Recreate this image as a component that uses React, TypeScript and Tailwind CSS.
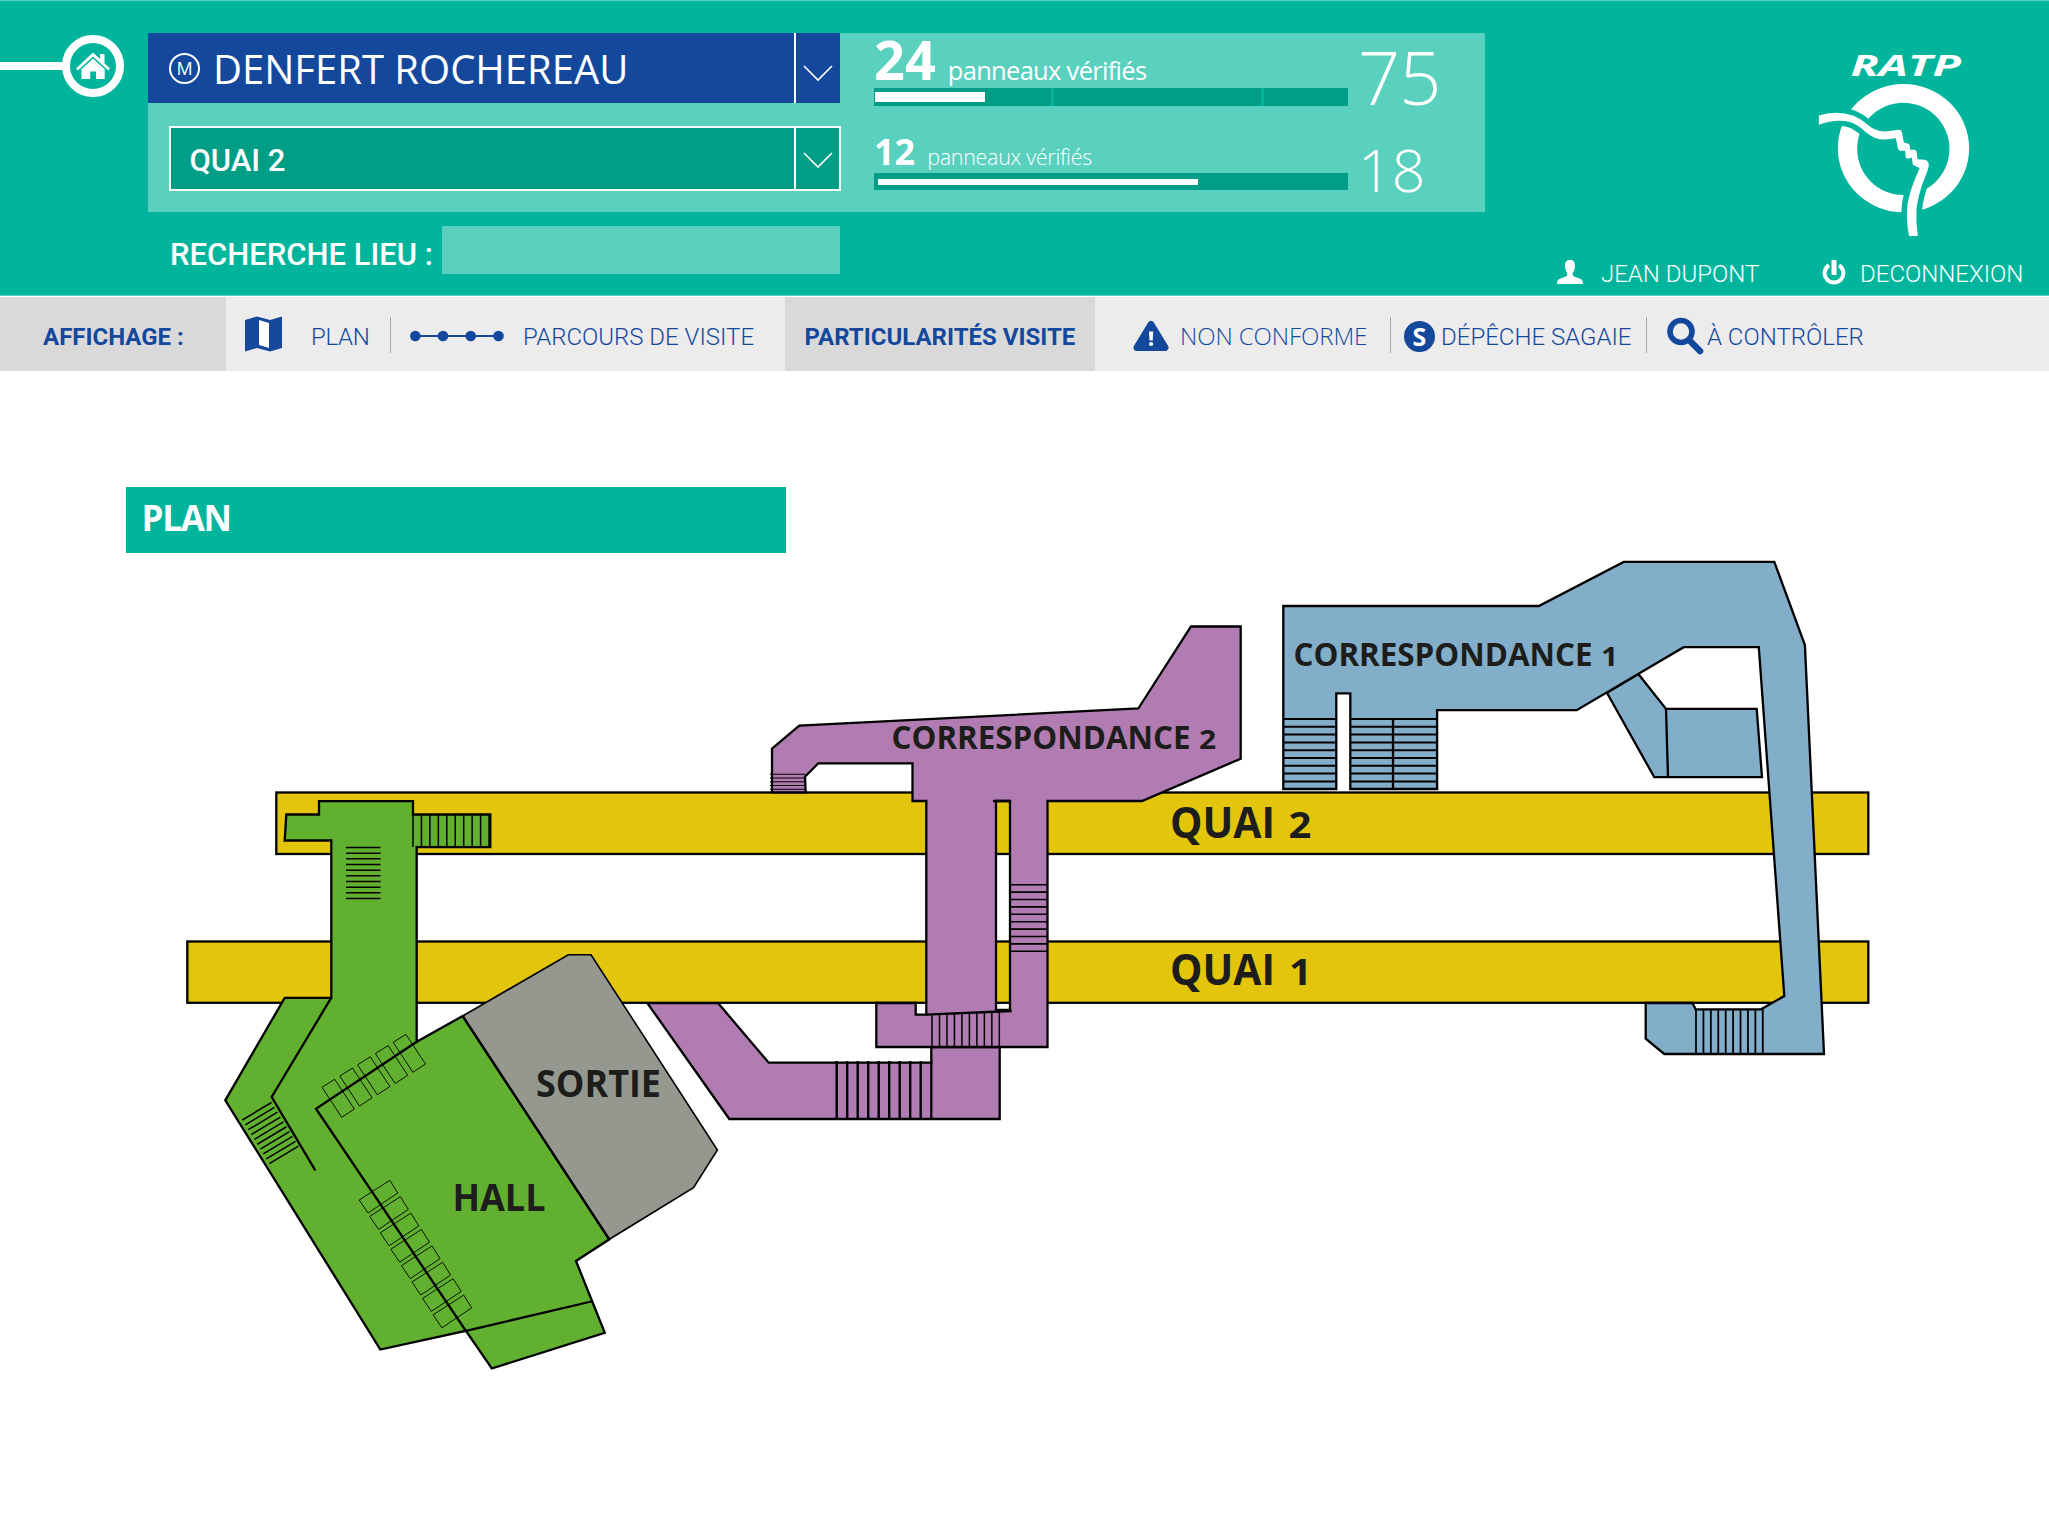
import React from "react";

const range = (n: number) => Array.from({ length: n }, (_, i) => i);

function HomeIcon() {
  return (
    <svg viewBox="0 0 34 28" className="h-[28px] w-[34px]" fill="#fff">
      <path d="M17 0.5 L24 7 V2 H28.5 V11.2 L34 16.4 L32.2 18.4 L17 4.4 L1.8 18.4 L0 16.4 Z" />
      <path d="M17 6.4 L28.7 17.2 V27 H20 V19.5 H14.2 V27 H5.5 V17.2 Z" />
    </svg>
  );
}

function Chevron() {
  return (
    <svg viewBox="0 0 30 17" className="h-[17px] w-[30px]" fill="none" stroke="#fff" strokeWidth="1.6">
      <path d="M1 1 L15 15 L29 1" />
    </svg>
  );
}

function MapIcon() {
  return (
    <svg viewBox="0 0 37 36" className="h-[36px] w-[37px]">
      <path d="M0 4 L12 0.5 L25 4 L37 0.5 V32 L25 35.5 L12 32 L0 35.5 Z" fill="#14489d" />
      <path d="M14 4 L24 7 V32 L14 29 Z" fill="#fff" />
    </svg>
  );
}

function RouteIcon() {
  return (
    <svg viewBox="0 0 94 12" className="h-[12px] w-[94px]" fill="#14489d">
      <rect x="5" y="5" width="84" height="2" />
      {[5.3, 33, 60.7, 88.5].map((x) => (
        <circle key={x} cx={x} cy="6" r="5.3" />
      ))}
    </svg>
  );
}

function WarningIcon() {
  return (
    <svg viewBox="0 0 36 32" className="h-[32px] w-[36px]">
      <path d="M18 4.5 L32 27.5 H4 Z" fill="#14489d" stroke="#14489d" strokeWidth="7" strokeLinejoin="round" />
      <path d="M16 11.5 H20.2 L19.7 20.5 H16.5 Z" fill="#fff" />
      <circle cx="18.1" cy="24" r="2.1" fill="#fff" />
    </svg>
  );
}

function SearchIcon() {
  return (
    <svg viewBox="0 0 37 38" className="h-[38px] w-[37px]" fill="none" stroke="#14489d">
      <circle cx="14" cy="14.5" r="11" strokeWidth="5.6" />
      <path d="M22.5 23.5 L33 34" strokeWidth="6.6" strokeLinecap="round" />
    </svg>
  );
}

function UserIcon() {
  return (
    <svg viewBox="0 0 26 24" className="h-[24px] w-[26px]" fill="#fff">
      <path d="M13 0 C16.4 0 18 2 18 5.5 C18 8.6 17 11.6 15.8 12.8 V15.6 C17 17.2 20.5 17.4 23.4 19 C25.4 20 26 21.6 26 24 H0 C0 21.6 0.6 20 2.6 19 C5.5 17.4 9 17.2 10.2 15.6 V12.8 C9 11.6 8 8.6 8 5.5 C8 2 9.6 0 13 0 Z" />
    </svg>
  );
}

function PowerIcon() {
  return (
    <svg viewBox="0 0 24 25" className="h-[25px] w-[24px]" fill="none" stroke="#fff">
      <path d="M7 5.2 A9.4 9.4 0 1 0 17 5.2" strokeWidth="4" />
      <path d="M12 0 V15" strokeWidth="5" />
    </svg>
  );
}

const FACE =
  "M911 347 Q960 330 1010 348 Q1032 358 1050 375 Q1070 394 1100 395 L1128 391 Q1146 388 1147 396 L1153 428 L1166 432 Q1172 436 1171 450 L1184 450 Q1190 453 1190 460 L1192 478 L1212 480 Q1225 483 1224 497 Q1222 512 1212 535 Q1192 590 1189 630 Q1187 670 1193 708 H1168 Q1158 660 1164 610 Q1170 570 1198 505 L1184 498 Q1177 495 1178 490 L1176 474 L1164 477 Q1158 476 1158 470 L1157 453 L1142 453 Q1136 450 1136 444 L1130 415 L1100 419 Q1070 420 1045 397 Q1020 374 1000 367 Q960 356 911 375 Z";

function RatpLogo() {
  return (
    <svg viewBox="900 160 450 560" preserveAspectRatio="none" className="h-[187px] w-[158px]" fill="#fff">
      <text
        x="1001"
        y="228"
        fontFamily="'Open Sans', sans-serif"
        fontWeight="700"
        fontStyle="italic"
        fontSize="83"
        textLength="314"
        lengthAdjust="spacingAndGlyphs"
      >
        RATP
      </text>
      <path
        fillRule="evenodd"
        d="M965 445 A187 192 0 1 1 1339 445 A187 192 0 1 1 965 445 Z M1020 447 A131.5 138 0 1 0 1283 447 A131.5 138 0 1 0 1020 447 Z"
      />
      <path d={FACE} stroke="#00b59c" strokeWidth="32" />
      <path d={FACE} />
    </svg>
  );
}

function Header() {
  return (
    <header className="flex h-[296px] items-start border-t border-b border-[#5ad0be] bg-[#00b59c] text-white">
      <div className="flex w-[148px] items-center pt-[34px]">
        <div className="h-2 w-[63px] bg-white" />
        <div className="-ml-px flex size-[62px] items-center justify-center rounded-full border-8 border-white">
          <HomeIcon />
        </div>
      </div>

      <div className="pt-8">
        <div className="flex h-[179px] w-[1337px] bg-[#5ad0be]">
          <div className="flex w-[693px] flex-col">
            <div className="flex h-[70px] w-[692px] bg-[#14489d]">
              <div className="flex flex-1 items-center pl-[21px]">
                <div className="flex size-[31px] items-center justify-center rounded-full border-2 border-white font-['Open_Sans'] text-[18px] leading-none">
                  M
                </div>
                <span className="ml-[13px] pt-px font-['Open_Sans'] text-[40px] leading-none whitespace-nowrap">DENFERT ROCHEREAU</span>
              </div>
              <div className="flex w-[46px] items-center justify-center border-l-2 border-white pt-[10px]">
                <Chevron />
              </div>
            </div>
            <div className="mt-[23px] ml-[21px] flex h-[65px] w-[672px] border-2 border-white bg-[#009e86]">
              <div className="flex flex-1 items-center pt-[3px] pl-[18.5px] font-[Roboto] text-[31px] leading-none font-medium">QUAI 2</div>
              <div className="flex w-[45px] items-center justify-center border-l-2 border-white pt-[3px]">
                <Chevron />
              </div>
            </div>
          </div>

          <div className="ml-[33px] flex w-[474px] flex-col">
            <div className="-mt-px flex h-[54px] items-baseline font-['Open_Sans'] whitespace-nowrap">
              <span className="text-[54px] leading-none font-bold">24</span>
              <span className="ml-3 text-[25.5px] leading-none tracking-[-0.7px]">panneaux vérifiés</span>
            </div>
            <div className="mt-0.5 flex h-[18px] bg-[#009e86]">
              <div className="mt-1 ml-px h-[10px] w-[110px] bg-white" />
              <div className="ml-[66px] w-[3px] bg-[#00b59c]" />
              <div className="ml-[207px] w-[3px] bg-[#00b59c]" />
            </div>
            <div className="mt-[28px] flex h-[35px] items-baseline font-['Open_Sans'] whitespace-nowrap">
              <span className="text-[36px] leading-none font-bold">12</span>
              <span className="ml-[12px] text-[21.5px] leading-none font-light tracking-[-0.3px]">panneaux vérifiés</span>
            </div>
            <div className="mt-1 flex h-[17px] items-center bg-[#009e86] pl-1">
              <div className="h-[6px] w-[320px] bg-white" />
            </div>
          </div>

          <div className="ml-[10px] flex w-[110px] flex-col pt-[7px] font-['Open_Sans'] font-light">
            <span className="text-[74px] leading-none tracking-[-1px]">75</span>
            <span className="mt-[26px] text-[59px] leading-none">18</span>
          </div>
        </div>

        <div className="mt-[14px] flex h-[48px] items-center pl-[21px]">
          <span className="w-[273px] pt-2 pl-px font-[Roboto] text-[31px] leading-none font-medium whitespace-nowrap">RECHERCHE LIEU :</span>
          <div className="h-[48px] w-[398px] bg-[#5ad0be]" />
        </div>
      </div>

      <div className="flex w-[564px] flex-col pt-[52px]">
        <div className="pl-[330px]">
          <RatpLogo />
        </div>
        <div className="mt-5 flex h-6 items-center font-[Roboto] text-[24px] leading-none font-light whitespace-nowrap">
          <div className="ml-[72px]">
            <UserIcon />
          </div>
          <span className="ml-[18px] w-[221px] pt-1">JEAN DUPONT</span>
          <PowerIcon />
          <span className="ml-3.5 pt-1">DECONNEXION</span>
        </div>
      </div>
    </header>
  );
}

function Toolbar() {
  return (
    <nav className="mt-px flex h-[74px] bg-[#ececec] font-[Roboto] text-[24px] leading-none font-light whitespace-nowrap text-[#14489d]">
      <div className="flex w-[226px] items-center bg-[#d9d9d9] pt-1.5 pl-[43px] font-bold">AFFICHAGE :</div>
      <div className="flex w-[559px] items-center">
        <div className="w-[85px] pl-[19px]">
          <MapIcon />
        </div>
        <span className="w-[79px] pt-1.5 tracking-[-0.3px]">PLAN</span>
        <div className="mt-0.5 h-9 w-px bg-[#a8a8a8]" />
        <div className="w-[132px] pt-[3px] pl-[19px]">
          <RouteIcon />
        </div>
        <span className="pt-1.5">PARCOURS DE VISITE</span>
      </div>
      <div className="flex w-[310px] items-center bg-[#d9d9d9] pt-1.5 pl-[19.5px] font-bold">PARTICULARITÉS VISITE</div>
      <div className="flex items-center">
        <div className="w-[85px] pt-1 pl-[38px]">
          <WarningIcon />
        </div>
        <span className="w-[210px] pt-[3px] font-['Open_Sans'] text-[24px] tracking-[-0.1px]">NON CONFORME</span>
        <div className="mt-0.5 h-9 w-px bg-[#a8a8a8]" />
        <div className="mt-1 ml-[13px] flex size-[31px] items-center justify-center rounded-full bg-[#14489d] font-['Open_Sans'] text-[25px] leading-none font-bold text-white">
          S
        </div>
        <span className="ml-1.5 w-[205px] pt-1.5">DÉPÊCHE SAGAIE</span>
        <div className="mt-0.5 h-9 w-px bg-[#a8a8a8]" />
        <div className="pt-[3px] pl-5">
          <SearchIcon />
        </div>
        <span className="ml-[3px] pt-1.5">À CONTRÔLER</span>
      </div>
    </nav>
  );
}

function Label(props: { x: number; y: number; size: number; width: number; text: string; digit?: string; digitX?: number }) {
  return (
    <g fill="#1d1d1b" fontFamily="'Open Sans', sans-serif" fontWeight="700">
      <text x={props.x} y={props.y} fontSize={props.size} textLength={props.width} lengthAdjust="spacingAndGlyphs">
        {props.text}
      </text>
      {props.digit && (
        <text transform={`translate(${props.digitX} ${props.y}) scale(1.12 1)`} fontSize={props.size * 0.84}>
          {props.digit}
        </text>
      )}
    </g>
  );
}

function StationMap() {
  return (
    <svg viewBox="0 553 2049 984" className="block h-[984px] w-[2049px]" stroke="#000" strokeWidth="2.3" fill="none">
      <g fill="#b17cb2">
        <path d="M647.3 1003 L729.3 1119 H999.7 V1047 H931.3 V1062.7 H768.7 L718 1003 Z" />
        <path d="M931.3 1062 V1119" />
      </g>

      <g fill="#e3c60c">
        <rect x="276.3" y="792.5" width="1592" height="61.5" />
        <rect x="187.3" y="941.5" width="1681" height="61.3" />
      </g>

      {/* Hall and its access corridors */}
      <path
        fill="#61b030"
        d="M319 801.2 H413 V814.5 H490.3 V847.2 H416.7 V1041.7 L462.7 1016 L609.3 1239.3 L576 1261 L604.8 1332.9 L491.8 1368.5 L465.9 1330.9 L380.3 1349.5 L225.3 1100.3 L284.7 997.9 H331.3 V840.5 H284.7 L286.3 814.5 H319 Z"
      />
      <path d="M331.3 997.7 L271.7 1097 L315.3 1170.3" />
      <path d="M416.7 1041.7 L316 1108.7 L465.9 1330.9 L591.4 1301.5" />
      {range(10).map((i) => (
        <path key={i} strokeWidth="1.5" d={`M${413 + i * 8.45} 814 v33`} />
      ))}
      {range(10).map((i) => (
        <path key={i} strokeWidth="1.5" d={`M346 ${847.5 + i * 5.67} h34.5`} />
      ))}
      {range(10).map((i) => (
        <path key={i} strokeWidth="1.5" d={`M${242.3 + i * 3} ${1120 + i * 4.85} l29.2 -17.5`} />
      ))}
      {range(5).map((i) => (
        <path key={i} strokeWidth="0.9" transform={`translate(${i * 17.8} ${-i * 11.25})`} d="M322 1087.3 L334.7 1079.3 L354.3 1109 L341.7 1117.3 Z" />
      ))}
      {range(8).map((i) => (
        <path key={i} strokeWidth="0.9" transform={`translate(${i * 10.56} ${i * 16.4})`} d="M359.2 1200 L389.8 1180.3 L397.8 1193 L368 1213 Z" />
      ))}

      {/* Exit */}
      <path fill="#95988f" strokeWidth="1.6" d="M462.7 1016 L568.3 954.7 H591 L717.4 1150 L693.5 1187.7 L609.3 1239.3 Z" />
      <path d="M462.7 1016 L609.3 1239.3" />

      {/* Transfer corridor 2 */}
      <path
        fill="#b17cb2"
        fillRule="evenodd"
        d="M772 748.7 L799.3 725.7 L1138.3 708.5 L1191 626.5 H1240.7 V758.7 L1142 801 H1047.5 V1047 H876.3 V1003 H915.7 V1014.7 H926.3 V801 H912.5 V763.3 H818.3 L805 776.7 L805.7 792.3 H772 Z M996 801 H1010 V1010 H996 Z"
      />
      <path d="M926 1014.7 L1011.7 1011 M993 801 H1010" />
      {range(10).map((i) => (
        <path key={i} strokeWidth="1.5" d={`M${932 + i * 7.48} ${1014 - i * 0.3} V1047`} />
      ))}
      {range(9).map((i) => (
        <path key={i} strokeWidth="2.4" d={`M${836.7 + i * 10.5} 1061 V1119`} />
      ))}
      {range(10).map((i) => (
        <path key={i} strokeWidth="1.6" d={`M1010 ${884.7 + i * 7.4} H1047.5`} />
      ))}
      {range(5).map((i) => (
        <path key={i} strokeWidth="1.1" d={`M770 ${774.3 + i * 3.75} H805.5`} />
      ))}

      {/* Transfer corridor 1 */}
      <g fill="#82aec9">
        <path d="M1606.9 692.7 L1638.4 674 L1666 708.9 H1756.7 L1762 777.2 H1654.3 Z" />
        <path d="M1666 708.7 L1668 777" />
        <path d="M1283.3 606 H1538.8 L1623.7 561.9 H1774.3 L1804.9 645 L1824 1054 H1664.3 L1645.7 1038.7 V1003 H1692.3 L1695.7 1009.3 H1761 L1784.3 996 L1758.8 647.2 H1683.7 L1576.7 710.2 H1437.1 V789 H1350.3 V693.3 H1336.3 V789 H1283.3 Z" />
      </g>
      {range(9).map((i) => (
        <path key={i} strokeWidth="2" d={`M1283.3 ${719 + i * 7.8} H1336.3 M1350.3 ${719 + i * 7.8} H1437.1`} />
      ))}
      <path d="M1393 718 V789" />
      {range(10).map((i) => (
        <path key={i} strokeWidth="1.8" d={`M${1696 + i * 7.42} 1009 V1054`} />
      ))}

      <g stroke="none">
        <Label x={1293.5} y={665.7} size={32} width={299} text="CORRESPONDANCE" digit="1" digitX={1601} />
        <Label x={891.5} y={748.7} size={32} width={299} text="CORRESPONDANCE" digit="2" digitX={1199} />
        <Label x={1170} y={838} size={42.5} width={105} text="QUAI" digit="2" digitX={1288.5} />
        <Label x={1170} y={985} size={42.5} width={105} text="QUAI" digit="1" digitX={1289} />
        <Label x={536} y={1096.5} size={37} width={125} text="SORTIE" />
        <Label x={452.5} y={1210.5} size={37.5} width={93} text="HALL" />
      </g>
    </svg>
  );
}

export default function App() {
  return (
    <div className="flex h-[1537px] w-[2049px] flex-col overflow-hidden bg-white">
      <Header />
      <Toolbar />
      <main className="pt-[116px]">
        <h1 className="ml-[125.5px] flex h-[66px] w-[660px] items-center bg-[#00b59c] pb-[5px] pl-4 font-['Open_Sans'] text-[35px] leading-none font-bold tracking-[-1.3px] text-white">
          PLAN
        </h1>
        <StationMap />
      </main>
    </div>
  );
}
